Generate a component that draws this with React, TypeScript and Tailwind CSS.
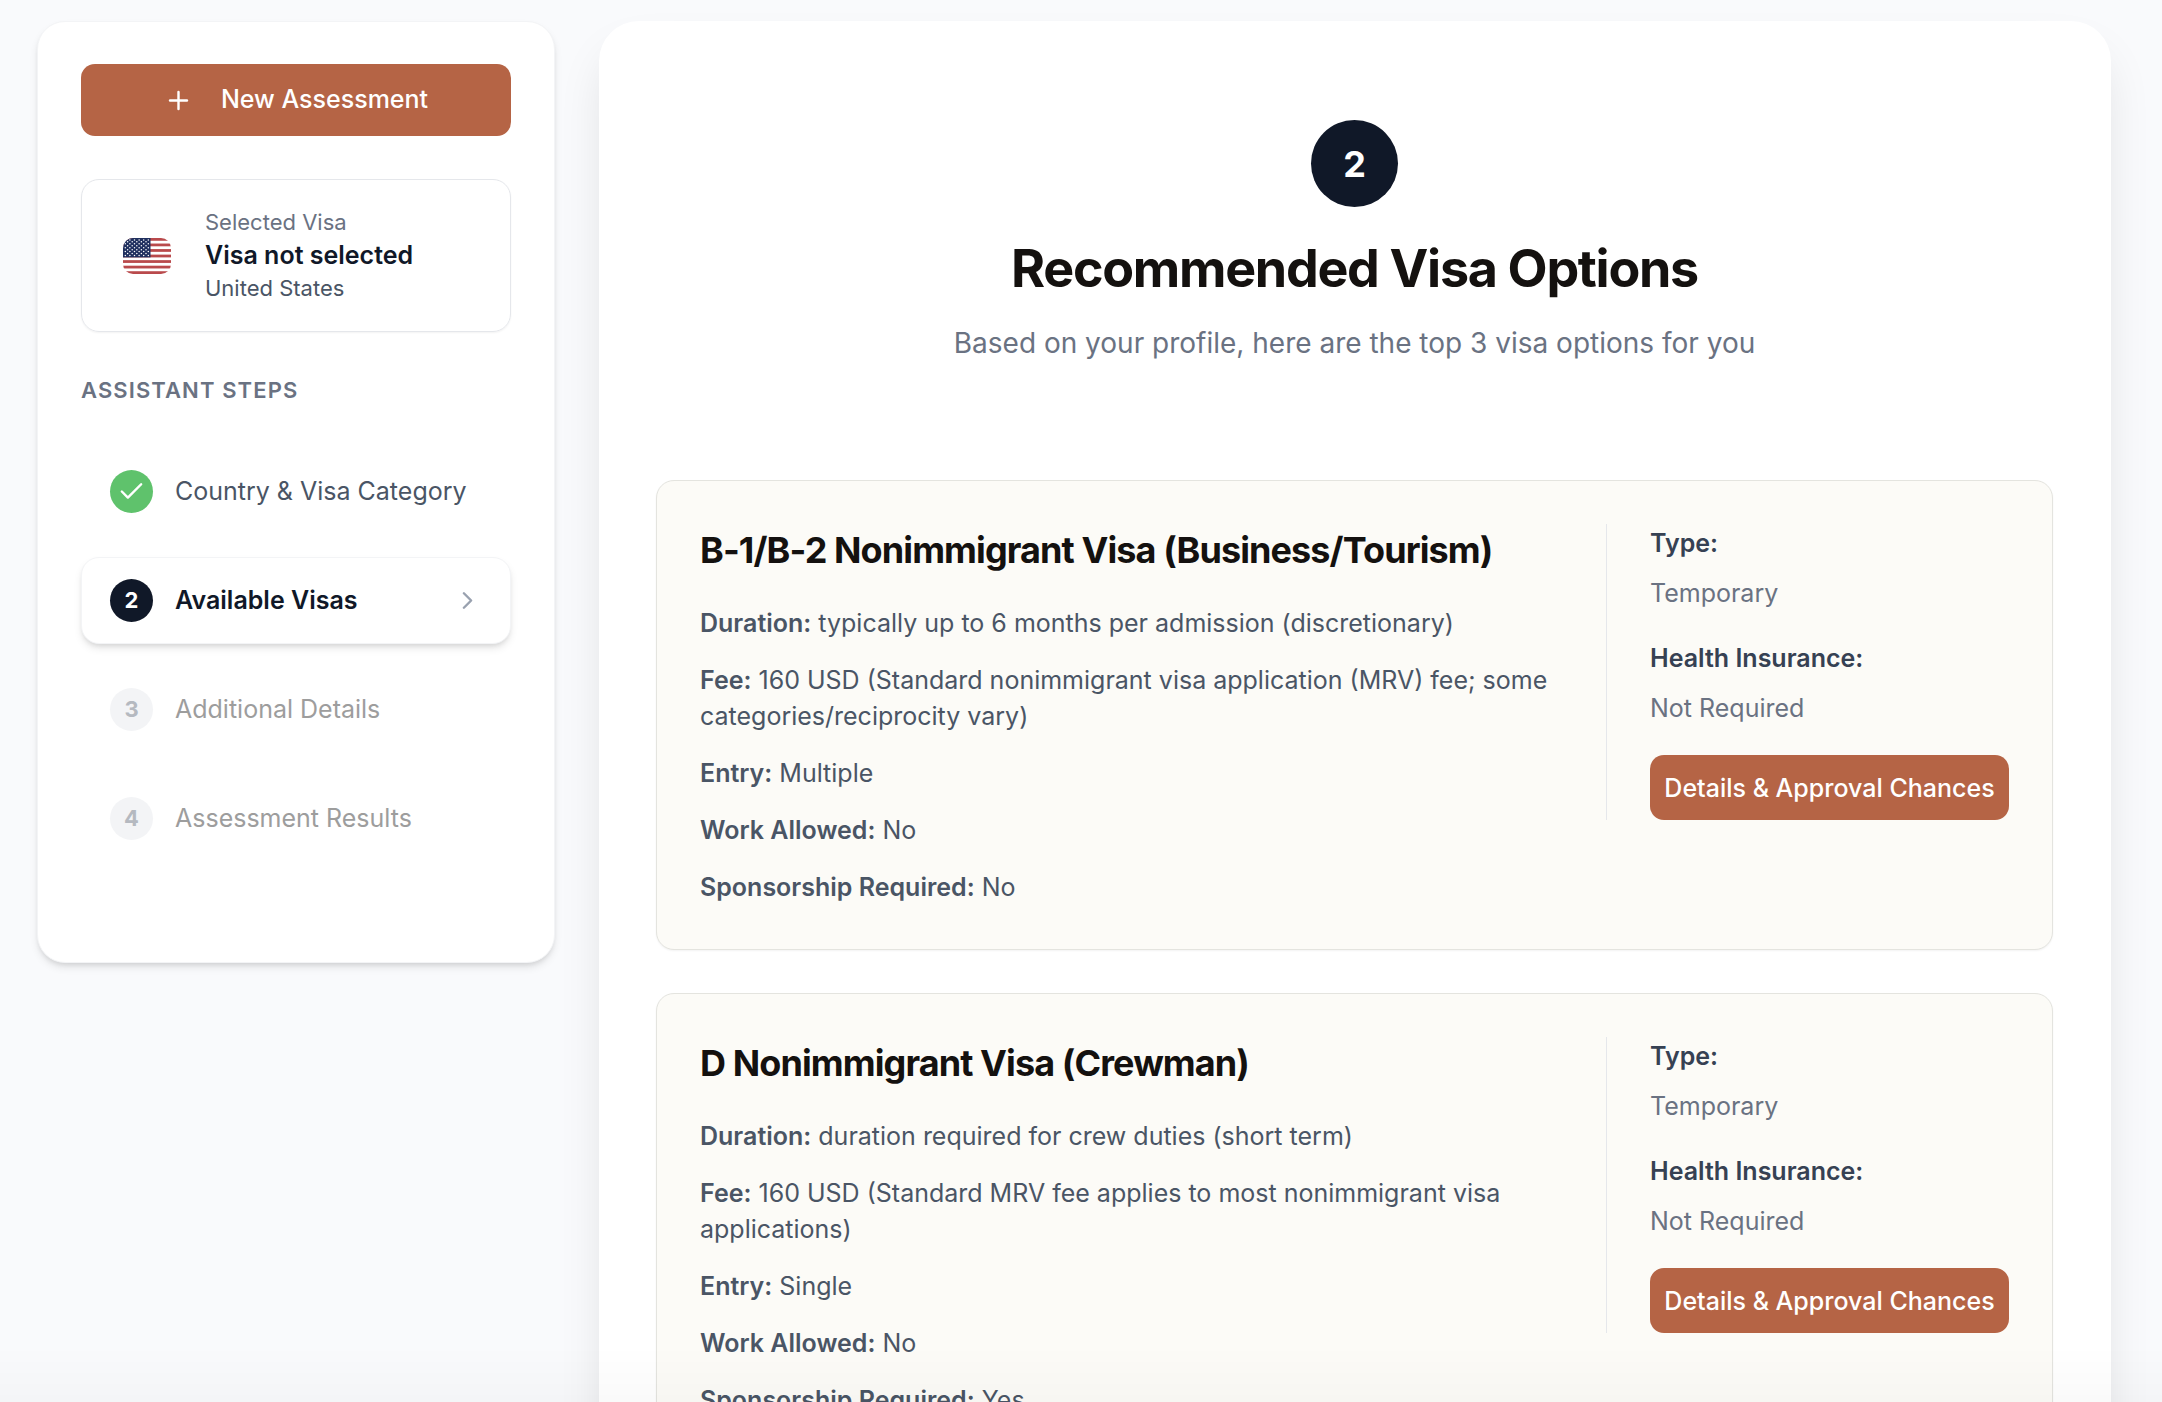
import React, { useState } from 'react';
import { Check, ChevronRight, Plus } from 'lucide-react';
import { clsx } from 'clsx';

interface Visa {
  id: string;
  name: string;
  facts: { label: string; value: string }[];
  type: string;
  insurance: string;
}

const STEPS = ['Country & Visa Category', 'Available Visas', 'Additional Details', 'Assessment Results'];

const VISAS: Visa[] = [
  {
    id: 'b1-b2',
    name: 'B-1/B-2 Nonimmigrant Visa (Business/Tourism)',
    facts: [
      { label: 'Duration', value: 'typically up to 6 months per admission (discretionary)' },
      { label: 'Fee', value: '160 USD (Standard nonimmigrant visa application (MRV) fee; some categories/reciprocity vary)' },
      { label: 'Entry', value: 'Multiple' },
      { label: 'Work Allowed', value: 'No' },
      { label: 'Sponsorship Required', value: 'No' },
    ],
    type: 'Temporary',
    insurance: 'Not Required',
  },
  {
    id: 'd',
    name: 'D Nonimmigrant Visa (Crewman)',
    facts: [
      { label: 'Duration', value: 'duration required for crew duties (short term)' },
      { label: 'Fee', value: '160 USD (Standard MRV fee applies to most nonimmigrant visa applications)' },
      { label: 'Entry', value: 'Single' },
      { label: 'Work Allowed', value: 'No' },
      { label: 'Sponsorship Required', value: 'Yes' },
    ],
    type: 'Temporary',
    insurance: 'Not Required',
  },
];

const UsFlag = () => (
  <svg viewBox="0 0 48 36" className="h-9 w-12 shrink-0 rounded-[10px]" role="img" aria-label="United States">
    <rect width="48" height="36" fill="#fff" />
    {[0, 2, 4, 6, 8, 10, 12].map(i => (
      <rect key={i} y={(i * 36) / 13} width="48" height={36 / 13} fill="#b94a4c" />
    ))}
    <rect width="27.5" height={(36 * 7) / 13} fill="#20305f" />
    {Array.from({ length: 9 }, (_, row) =>
      Array.from({ length: row % 2 ? 5 : 6 }, (_, col) => (
        <circle key={`${row}-${col}`} cx={2.3 + col * 4.6 + (row % 2 ? 2.3 : 0)} cy={1.9 + row * 1.95} r="0.75" fill="#fff" />
      ))
    )}
  </svg>
);

interface SidebarProps {
  current: number;
  setCurrent: (step: number) => void;
}

const Sidebar: React.FC<SidebarProps> = ({ current, setCurrent }) => (
  <aside className="w-[518px] shrink-0 rounded-[28px] border border-gray-100 bg-white px-[43px] pt-[42px] pb-[100px] shadow-[0_5px_8px_-1px_rgba(0,0,0,0.1),0_3px_5px_-2px_rgba(0,0,0,0.1)]">
    <button className="flex h-[72px] w-full items-center justify-center gap-7 rounded-[14px] bg-[#b56445] text-[25px] font-medium text-white">
      <Plus size={29} strokeWidth={2} />
      New Assessment
    </button>

    <div className="mt-[43px] flex h-[153px] items-center gap-[34px] rounded-[18px] border border-gray-200 px-[41px] shadow-xs">
      <UsFlag />
      <div>
        <div className="text-[22px] leading-[33px] text-gray-500">Selected Visa</div>
        <div className="text-[25px] leading-[33px] font-semibold text-gray-900">Visa not selected</div>
        <div className="text-[22px] leading-[33px] text-gray-600">United States</div>
      </div>
    </div>

    <h2 className="mt-[43px] text-[22px] leading-[31px] font-semibold tracking-wider text-gray-500 uppercase">Assistant Steps</h2>

    <ol className="mt-[42px] space-y-[22px]">
      {STEPS.map((label, i) => {
        const step = i + 1;
        const done = step < current;
        const active = step === current;
        return (
          <li key={label}>
            <button
              disabled={step > current}
              onClick={() => setCurrent(step)}
              className={clsx(
                'flex h-[87px] w-full items-center gap-[22px] rounded-[18px] border px-7 text-left text-[25px]',
                active
                  ? 'border-gray-100 bg-white font-semibold text-gray-900 shadow-[0_5px_8px_-1px_rgba(0,0,0,0.1),0_3px_5px_-2px_rgba(0,0,0,0.1)]'
                  : 'border-transparent',
                done && 'text-gray-600',
                step > current && 'text-[#9d9d9d]'
              )}
            >
              <span
                className={clsx(
                  'flex size-[43px] shrink-0 items-center justify-center rounded-full text-[22px] font-bold',
                  done && 'bg-[#5fc26c] text-white',
                  active && 'bg-gray-900 text-white',
                  step > current && 'bg-gray-100 text-[#b5b9c0]'
                )}
              >
                {done ? <Check size={29} strokeWidth={2} /> : step}
              </span>
              <span className="flex-1">{label}</span>
              {active && <ChevronRight size={29} strokeWidth={2} className="text-gray-400" />}
            </button>
          </li>
        );
      })}
    </ol>
  </aside>
);

const VisaCard: React.FC<{ visa: Visa }> = ({ visa }) => (
  <article className="flex items-start rounded-[18px] border border-[#e4e4df] bg-[#fcfbf7] px-[43px] pt-[43px] pb-11 text-[25px] leading-9 shadow-xs">
    <div className="min-w-0 flex-1 pr-[43px]">
      <h2 className="text-[36px] leading-[52px] font-bold tracking-tight text-[#14110f]">{visa.name}</h2>
      <div className="mt-[29px] space-y-[21px] text-gray-600">
        {visa.facts.map(f => (
          <p key={f.label}>
            <strong className="font-semibold">{f.label}:</strong> {f.value}
          </p>
        ))}
      </div>
    </div>

    <div className="w-[403px] shrink-0 border-l border-gray-200 pt-px pl-[43px]">
      <h3 className="font-semibold text-gray-700">Type:</h3>
      <p className="mt-[14px] text-gray-500">{visa.type}</p>
      <h3 className="mt-[29px] font-semibold text-gray-700">Health Insurance:</h3>
      <p className="mt-[14px] text-gray-500">{visa.insurance}</p>
      <button className="mt-[29px] h-[65px] w-full rounded-[14px] bg-[#b56445] font-medium whitespace-nowrap text-white">
        Details &amp; Approval Chances
      </button>
    </div>
  </article>
);

export default function App() {
  const [current, setCurrent] = useState(2);

  return (
    <div className="h-screen overflow-hidden bg-[#f9fafc] font-['Inter',sans-serif]">
      <div className="flex items-start gap-11 pt-[21px] pr-[51px] pl-[37px]">
        <Sidebar current={current} setCurrent={setCurrent} />

        <main className="min-w-0 flex-1 rounded-[40px] bg-white pt-[99px] pr-[58px] pb-[57px] pl-[57px] shadow-[0_27px_50px_-10px_rgba(0,0,0,0.13)]">
          <header className="flex flex-col items-center text-center">
            <div className="flex size-[87px] items-center justify-center rounded-full bg-gray-900 text-[36px] font-bold text-white">
              {current}
            </div>
            <h1 className="mt-[29px] text-[52px] leading-[65px] font-bold tracking-tight text-[#14110f]">Recommended Visa Options</h1>
            <p className="mt-[21px] text-[28px] leading-[43px] text-gray-500">
              Based on your profile, here are the top 3 visa options for you
            </p>
          </header>

          <div className="mt-[115px] space-y-[43px]">
            {VISAS.map(v => (
              <VisaCard key={v.id} visa={v} />
            ))}
          </div>
        </main>
      </div>

      <div className="pointer-events-none fixed inset-x-0 bottom-0 h-14 bg-gradient-to-t from-black/[0.02] to-transparent" />
    </div>
  );
}
